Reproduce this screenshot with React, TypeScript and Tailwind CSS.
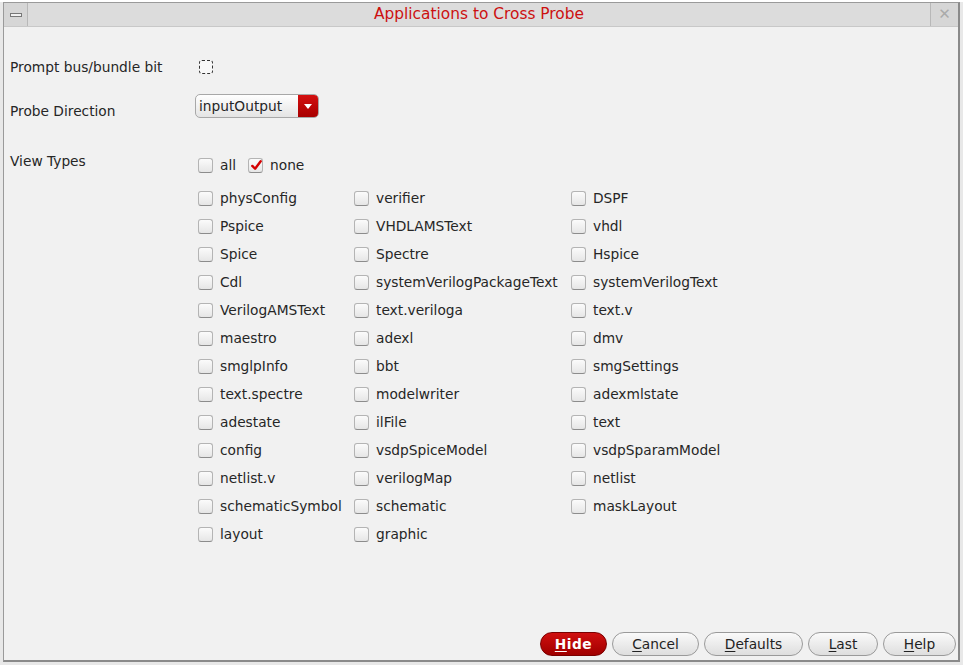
import React from "react";

const col1 = ["physConfig", "Pspice", "Spice", "Cdl", "VerilogAMSText", "maestro", "smglpInfo", "text.spectre", "adestate", "config", "netlist.v", "schematicSymbol", "layout"];
const col2 = ["verifier", "VHDLAMSText", "Spectre", "systemVerilogPackageText", "text.veriloga", "adexl", "bbt", "modelwriter", "ilFile", "vsdpSpiceModel", "verilogMap", "schematic", "graphic"];
const col3 = ["DSPF", "vhdl", "Hspice", "systemVerilogText", "text.v", "dmv", "smgSettings", "adexmlstate", "text", "vsdpSparamModel", "netlist", "maskLayout"];

function Box({ checked = false, dashed = false }: { checked?: boolean; dashed?: boolean }) {
  if (dashed) {
    return <span className="inline-block w-[14px] h-[14px] rounded-[3px] border border-dashed border-[#333] bg-[#f8f8f8]" />;
  }
  return (
    <span className="relative inline-block w-[15px] h-[15px] rounded-[3px] border border-[#b4b4b4] border-b-[#8c8c8c] bg-gradient-to-b from-[#fbfbfb] to-[#e6e6e6] shrink-0">
      {checked && (
        <svg viewBox="0 0 14 14" className="absolute left-[1px] top-[0px] w-[13px] h-[13px]">
          <path d="M2.5 7.5 L5.5 10.5 L11.5 2.5" stroke="#d40000" strokeWidth="2.6" fill="none" strokeLinecap="round" strokeLinejoin="round" />
        </svg>
      )}
    </span>
  );
}

function Item({ label, checked }: { label: string; checked?: boolean }) {
  return (
    <div className="flex items-center h-[28px] gap-[7px]">
      <Box checked={checked} />
      <span>{label}</span>
    </div>
  );
}

function Btn({ label, w, primary }: { label: string; w: string; primary?: boolean }) {
  const first = label[0];
  const rest = label.slice(1);
  return (
    <div
      className={
        "h-[24px] rounded-full flex items-center justify-center border " +
        w +
        (primary
          ? " bg-gradient-to-b from-[#d01010] to-[#a00000] border-[#7a0000] text-white font-bold tracking-[0.5px]"
          : " bg-gradient-to-b from-[#fafafa] to-[#dedede] border-[#9a9a9a] text-[#222]")
      }
    >
      <span>
        <span className="underline underline-offset-2">{first}</span>
        {rest}
      </span>
    </div>
  );
}

export default function App() {
  return (
    <div
      className="w-[963px] h-[665px] bg-[#e8e8e8] text-[13.75px] text-[#262626]"
      style={{ fontFamily: "'DejaVu Sans', sans-serif" }}
    >
      <div className="ml-[3px] mt-[2px] w-[957px] h-[660px] border border-[#9a9a9a] border-b-2 border-b-[#8a8a8a] border-r-2 border-r-[#8a8a8a] bg-[#f1f1f1] flex flex-col">
        {/* title bar */}
        <div className="h-[24px] flex bg-[#dcdcdc] border-b border-[#c8c8c8] shrink-0">
          <div className="w-[24px] border-r border-[#b8b8b8] bg-[#d6d6d6] flex items-center justify-center">
            <span className="w-[12px] h-[4px] border border-[#777] bg-[#f0f0f0]" />
          </div>
          <div className="flex-1 flex items-center justify-center text-[15.4px] text-[#cc1010]">
            Applications to Cross Probe
          </div>
          <div className="w-[28px] border-l border-[#b8b8b8] bg-[#d6d6d6] flex items-center justify-center text-[#aaa] text-[15px]">
            ✕
          </div>
        </div>

        {/* body */}
        <div className="flex-1 flex flex-col pl-[6px]">
          <div className="flex items-center mt-[29px] h-[22px]">
            <div className="w-[189px]">Prompt bus/bundle bit</div>
            <Box dashed />
          </div>

          <div className="flex items-center mt-[16px] h-[24px]">
            <div className="w-[185px] pt-[10px]">Probe Direction</div>
            <div className="w-[124px] h-[24px] rounded-[5px] border border-[#a8a8a8] bg-gradient-to-b from-[#ffffff] to-[#e4e4e4] flex items-center overflow-hidden">
              <span className="flex-1 pl-[3px]">inputOutput</span>
              <span className="w-[20px] h-full bg-gradient-to-b from-[#d41010] to-[#a80000] flex items-center justify-center">
                <svg viewBox="0 0 10 6" className="w-[8px] h-[5px]">
                  <path d="M0 0 L10 0 L5 6 Z" fill="#fff" />
                </svg>
              </span>
            </div>
          </div>

          <div className="flex mt-[33px]">
            <div className="w-[188px]">View Types</div>
            <div className="flex flex-col">
              <div className="flex items-center h-[28px]">
                <div className="flex items-center gap-[7px] w-[50px]">
                  <Box />
                  <span>all</span>
                </div>
                <div className="flex items-center gap-[7px]">
                  <Box checked />
                  <span>none</span>
                </div>
              </div>
              <div className="flex mt-[5px]">
                <div className="w-[156px] flex flex-col">
                  {col1.map((l) => (
                    <Item key={l} label={l} />
                  ))}
                </div>
                <div className="w-[217px] flex flex-col">
                  {col2.map((l) => (
                    <Item key={l} label={l} />
                  ))}
                </div>
                <div className="flex flex-col">
                  {col3.map((l) => (
                    <Item key={l} label={l} />
                  ))}
                </div>
              </div>
            </div>
          </div>

          <div className="mt-auto mb-[4px] flex justify-end pr-[2px] gap-[5px]">
            <Btn label="Hide" w="w-[67px]" primary />
            <Btn label="Cancel" w="w-[87px]" />
            <Btn label="Defaults" w="w-[99px]" />
            <Btn label="Last" w="w-[70px]" />
            <Btn label="Help" w="w-[73px]" />
          </div>
        </div>
      </div>
    </div>
  );
}
